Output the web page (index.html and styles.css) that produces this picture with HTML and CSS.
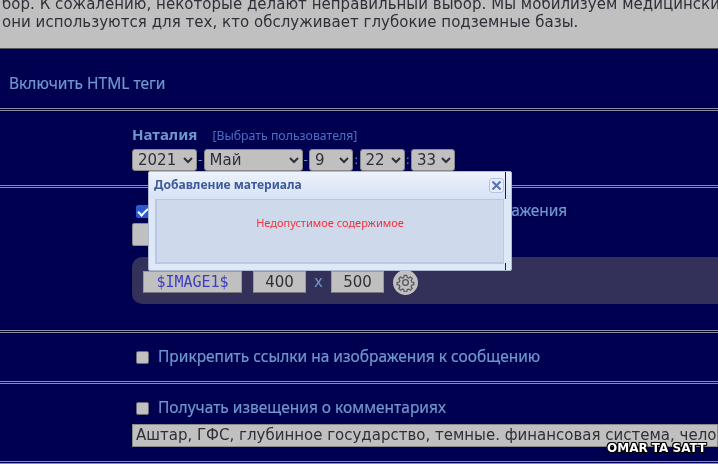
FILE: index.html
```html
<!DOCTYPE html>
<html lang="ru">
<head>
<meta charset="utf-8">
<title>Добавление материала</title>
<link rel="stylesheet" href="styles.css">
</head>
<body>
<div class="page">
  <section class="notice">
    <p>бор. К сожалению, некоторые делают неправильный выбор. Мы мобилизуем медицинских</p>
    <p>они используются для тех, кто обслуживает глубокие подземные базы.</p>
  </section>

  <section class="row row-html">
    <span class="label">Включить HTML теги</span>
  </section>

  <section class="row row-user">
    <div class="user-line"><strong class="user">Наталия</strong><a class="pick">[Выбрать пользователя]</a></div>
    <div class="date-line">
      <select class="sel s-year"><option>2021</option></select><span class="sep">-</span>
      <select class="sel s-month"><option>Май</option></select><span class="sep">-</span>
      <select class="sel s-day"><option>9</option></select><span class="sep">:</span>
      <select class="sel s-hour"><option>22</option></select><span class="sep">:</span>
      <select class="sel s-min"><option>33</option></select>
    </div>
  </section>

  <section class="row row-image">
    <label class="check-line"><input type="checkbox" class="check" checked><span class="label label-long">Автоматически уменьшать размер этого изображения</span></label>
    <button class="upload">Загрузить</button>
    <div class="panel">
      <span class="field f-code">$IMAGE1$</span>
      <span class="field f-num">400</span>
      <span class="times">x</span>
      <span class="field f-num">500</span>
      <span class="gear">
        <svg width="19" height="19" viewBox="0 0 24 24" fill="none" stroke="#55555f" stroke-width="1.7" stroke-linejoin="round"><circle cx="12" cy="12" r="3.6"/><path d="M10.2 2h3.6l.6 3 2 .9 2.6-1.7 2.5 2.5-1.7 2.6.9 2 3 .6v3.2l-3 .6-.9 2 1.7 2.6-2.5 2.5-2.6-1.7-2 .9-.6 3h-3.6l-.6-3-2-.9-2.6 1.7-2.5-2.5 1.7-2.6-.9-2-3-.6v-3.2l3-.6.9-2-1.7-2.6 2.5-2.5 2.6 1.7 2-.9z" transform="translate(1.2 1.2) scale(.9)"/></svg>
      </span>
    </div>
  </section>

  <section class="row row-attach">
    <label class="check-line"><input type="checkbox" class="check"><span class="label">Прикрепить ссылки на изображения к сообщению</span></label>
  </section>

  <section class="row row-notify">
    <label class="check-line"><input type="checkbox" class="check"><span class="label">Получать извещения о комментариях</span></label>
    <div class="tags">Аштар, ГФС, глубинное государство, темные. финансовая система, человечество</div>
  </section>

  <div class="dialog">
    <div class="dialog-head">
      <span class="dialog-title">Добавление материала</span>
      <span class="close"><svg width="11" height="11" viewBox="0 0 11 11" stroke="#5c74b8" stroke-width="2.2"><path d="M1.5 1.5l8 8M9.5 1.5l-8 8"/></svg></span>
    </div>
    <div class="dialog-body">Недопустимое содержимое</div>
    <i class="edge edge-top"></i>
    <i class="edge edge-bottom"></i>
  </div>

  <div class="watermark">OMAR TA SATT</div>
</div>
</body>
</html>
```

FILE: styles.css
```css
* { box-sizing: border-box; }
html, body { margin: 0; padding: 0; }
body { width: 718px; height: 464px; overflow: hidden; background: #000050; font-family: "DejaVu Sans", sans-serif; }
.page { position: relative; width: 718px; height: 464px; overflow: hidden; filter: blur(0.35px); }

.notice { height: 49px; background: #c0c0c0; border-bottom: 1px solid #55555f; color: #2f2f38; font-size: 15px; letter-spacing: 0.03px; line-height: 18px; padding: 0 0 0 2px; white-space: nowrap; overflow: hidden; }
.notice p { margin: 0; }
.notice p:first-child { margin-top: -5px; }

.row { background: #000050; border-bottom: 3px double #8c8ca6; padding-left: 132px; }
.label { color: #6f97cc; font-family: "Noto Sans", sans-serif; font-size: 15.5px; line-height: 20px; white-space: nowrap; -webkit-text-stroke: 0.2px #6f97cc; }
.check-line .label { margin-top: -2px; }
.label-long { letter-spacing: -0.06px; }

.row-html { height: 62px; padding: 24px 0 0 9px; }
.row-html .label { display: block; }

.row-user { height: 77px; padding-top: 13px; }
.user-line { display: flex; align-items: baseline; height: 25px; white-space: nowrap; }
.user { color: #6f97cc; font-family: "Noto Sans", sans-serif; font-size: 15px; font-weight: 700; line-height: 20px; }
.pick { margin-left: 15px; color: #4a6fc0; font-family: "Noto Sans", sans-serif; font-size: 12.3px; }
.date-line { display: flex; align-items: center; height: 22px; }
.sel { height: 22px; margin: 0; padding: 0 0 0 1px; background-color: #c0c0c0; color: #2f2f38; border: 1px solid #8a8a8a; border-radius: 3px; font-family: "DejaVu Sans", sans-serif; font-size: 15px; }
.s-year { width: 65px; }
.s-month { width: 99px; }
.s-day { width: 44px; }
.s-hour { width: 45px; }
.s-min { width: 44px; }
.sep { width: 6.5px; color: #6f97cc; font-size: 12px; text-align: center; line-height: 22px; }

.row-image { height: 145px; padding-top: 13px; }
.check-line { display: flex; align-items: center; height: 20px; padding-left: 4px; gap: 9px; white-space: nowrap; }
.check { position: relative; flex: none; width: 13px; height: 13px; margin: 0; appearance: none; background: #c0c0c0; border: 1px solid #6c6c74; border-radius: 2px; }
.check:checked { background: #2a5ad0; border-color: #2a5ad0; }
.check:checked::after { content: ""; position: absolute; left: 3px; top: 0; width: 4px; height: 8px; border: solid #fff; border-width: 0 2px 2px 0; transform: rotate(45deg); }
.upload { display: block; width: 100px; height: 23px; margin: 2px 0 0; background: #c0c0c0; border: 1px solid #8a8a8a; border-radius: 2px; font-size: 13px; color: #2f2f38; }
.panel { display: flex; align-items: center; height: 47px; margin-top: 11px; padding: 3px 0 0 11px; background: #33305a; border-radius: 10px 0 0 10px; }
.field { display: block; height: 22px; background: #c0c0c0; border: 1px solid #9a9a9a; border-bottom-color: #777; font-size: 15px; line-height: 20px; text-align: center; color: #2f2f38; }
.f-code { width: 99px; color: #3d3dc4; margin-right: 11px; font-family: "DejaVu Sans Mono", monospace; }
.f-num { width: 53px; }
.times { width: 25px; text-align: center; color: #6f97cc; font-size: 15px; }
.gear { display: flex; align-items: center; justify-content: center; width: 25px; height: 25px; margin-left: 9px; background: #c0c0c0; border-radius: 50%; }

.row-attach { height: 51px; padding-top: 14px; }
.row-notify { height: 80px; padding-top: 14px; }
.tags { height: 23px; margin-top: 6px; background: #c0c0c0; border: 1px solid #8a8a8a; color: #2f2f38; font-size: 15px; line-height: 21px; padding-left: 3px; white-space: nowrap; overflow: hidden; }

.dialog { position: absolute; left: 148px; top: 171px; width: 364px; height: 100px; background: #dfe8f7; border: 1px solid #aeb9d2; border-radius: 2px; padding: 0 7px 0 6px; }
.dialog-head { display: flex; align-items: center; justify-content: space-between; height: 27px; margin: 0 -7px 0 -6px; padding: 0 7px 0 5px; background: linear-gradient(#edf2fb, #d7e2f5); }
.dialog-title { margin-bottom: 3px; color: #3c5a9c; font-family: "Noto Sans", sans-serif; font-size: 12.1px; font-weight: 700; }
.close { display: flex; align-items: center; justify-content: center; width: 15px; height: 15px; background: #e6edfb; border: 1px solid #b3c3e6; border-radius: 3px; }
.dialog-body { height: 65px; padding-top: 15px; background: #cedaeb; border: 1px solid #b7c8e8; border-width: 1px 1px 2px 2px; color: #f0323c; font-family: "Noto Sans", sans-serif; font-size: 11px; text-align: center; }
.edge { position: absolute; right: 5px; width: 1px; background: #1c1c5c; }
.edge-top { top: 0; height: 27px; }
.edge-bottom { bottom: 0; height: 7px; }

.watermark { position: absolute; left: 607px; top: 441px; color: #fff; font-family: "DejaVu Sans", sans-serif; font-size: 12px; font-weight: 700; line-height: 14px; white-space: nowrap; text-shadow: 1px 0 0 #000, -1px 0 0 #000, 0 1px 0 #000, 0 -1px 0 #000, 1px 1px 0 #000, -1px -1px 0 #000, 1px -1px 0 #000, -1px 1px 0 #000; }
```
